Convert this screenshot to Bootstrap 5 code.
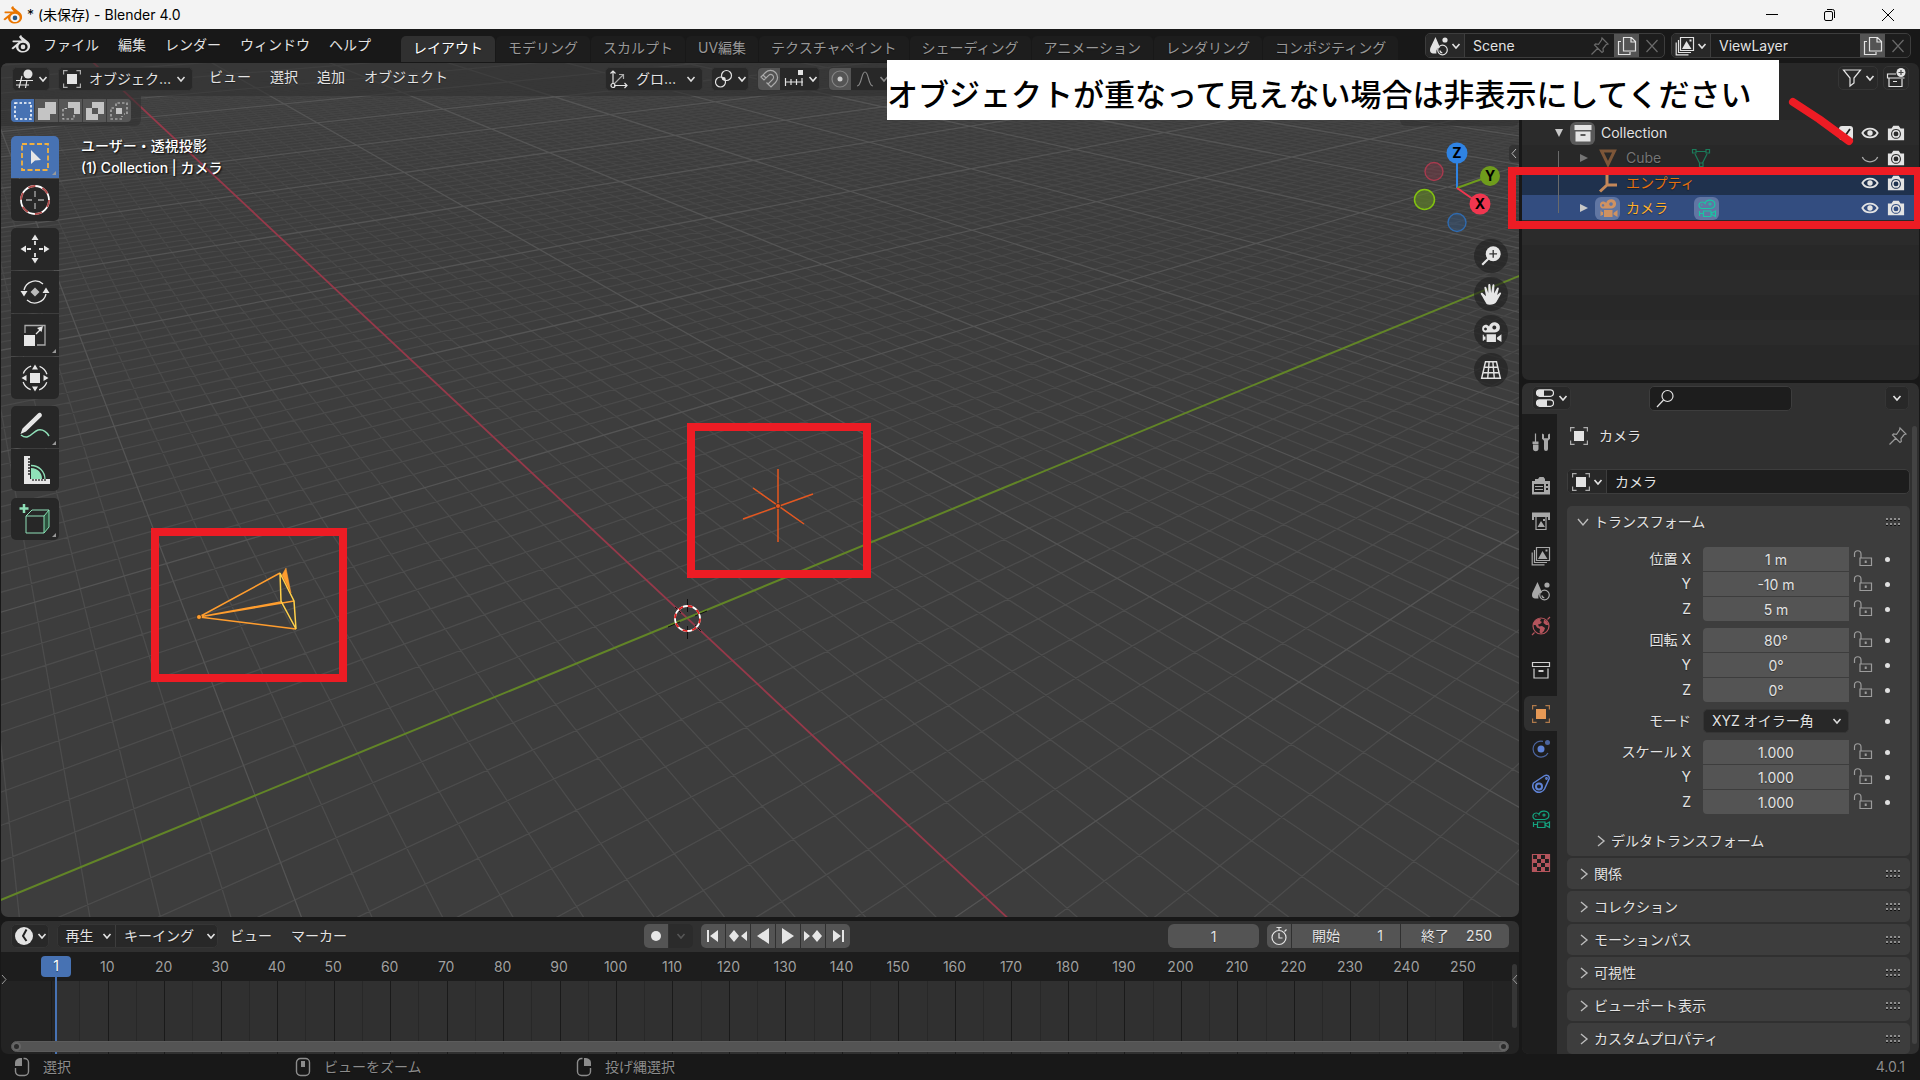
<!DOCTYPE html>
<html lang="ja" data-bs-theme="dark">
<head>
<meta charset="utf-8">
<meta name="viewport" content="width=device-width, initial-scale=1">
<title>* (未保存) - Blender 4.0</title>
<link href="https://cdn.jsdelivr.net/npm/bootstrap@5.3.0/dist/css/bootstrap.min.css" rel="stylesheet">
<style>
:root{--ui:#303030;--deep:#1d1d1d;--btn:#282828;--line:#3d3d3d;--num:#545454;--accent:#4772b3;--txt:#e3e3e3;--note:#ed1c24}
body{background:#181818;color:var(--txt);font:14px/20px Inter,"Noto Sans CJK JP",sans-serif;overflow:hidden;text-shadow:0 1px 1px rgba(0,0,0,.4)}
svg{display:block;flex:none}
.ic{width:20px;height:20px;fill:none;stroke:currentColor;stroke-width:1.2}
.chev{width:10px;height:10px;fill:none;stroke:currentColor;stroke-width:1.6}
button,input,select{font:inherit;color:inherit;text-shadow:inherit}
button{border:0;padding:0;background:none;display:flex;align-items:center;justify-content:center}
.app{height:100vh}
.titlebar{height:29px;background:#f3f3f3;color:#000;text-shadow:none;padding-left:3px}
.titlebar button{width:58px;height:29px}
.titlebar div{margin-right:3px}
.topbar{height:34px;background:#181818;padding:0 9px 0 11px}
.topbar a,.menus a{color:inherit;text-decoration:none;white-space:nowrap}
.mainmenu{gap:19px;padding:0 30px 2px 12px}
.wtab{height:26px;background:#1d1d1d;color:#989898 !important;border-radius:5px 5px 0 0;padding:2px 12px 0;line-height:20px}
.wtab.active{background:var(--ui);color:#fff !important}
.tabstrip{gap:1px;overflow:hidden;height:26px;margin-top:7px;flex:1 1 0;min-width:0}
.idrow{gap:6px}
.idblock{height:25px;border:1px solid var(--line);border-radius:5px;background:var(--deep);overflow:hidden;width:240px}
.idblock>button{width:25px;height:100%}
.idblock>.idpick{width:39px;background:var(--btn);border-right:1px solid var(--line);gap:2px}
.idblock input{flex:1;min-width:0;border:0;background:none;outline:0;padding:0 8px}
.copy{background:var(--num)}
.dim{color:#6a6a6a}
.main{padding:0 1px;gap:3px}
.leftcol{gap:4px}
.viewport{background:#3d3d3d;border-radius:7px;overflow:hidden}
.scene{position:absolute;inset:0;width:100%;height:100%}
.vhead{position:relative;height:33px;background:rgba(48,48,48,.6);padding:4px 11px 5px}
.pill{height:24px;background:var(--btn);border:1px solid #353535;border-radius:5px;color:var(--txt);gap:3px}
.pick{width:38px}
.menus{gap:19px;padding-left:16px}
.vgroup{margin-left:auto;margin-right:617px}
select.bpick{appearance:none;background:var(--btn) url("data:image/svg+xml,%3Csvg xmlns='http://www.w3.org/2000/svg' viewBox='0 0 10 10'%3E%3Cpath fill='none' stroke='%23ddd' stroke-width='1.5' d='M1.5 3l3.500 4 3.500-4'/%3E%3C/svg%3E") no-repeat right 6px center/10px;border:1px solid #353535;border-radius:5px;height:24px;padding:0 20px 0 8px;outline:0}
.withicon{position:relative}
.withicon>svg{position:absolute;left:4px;top:2px;pointer-events:none}
.withicon>select{padding-left:30px}
.modesel{width:135px}
.orisel{width:98px}
.wide63{width:63px}
.half{width:22px}
.selbar{position:relative;background:rgba(48,48,48,.6);width:140px;height:30px;padding:3px 0 0 10px;border-radius:0 0 6px 0}
.selbar button{width:24px;height:23px;background:#565656;border-right:1px solid #3d3d3d;color:#c4c4c4}
.selbar button:first-child{background:var(--accent);border-radius:4px 0 0 4px;color:#fff}
.selbar button:last-child{border-radius:0 4px 4px 0;border:0}
.optbar{position:relative;width:119px;height:30px;background:rgba(48,48,48,.6);border-radius:0 0 6px 6px}
.tools{gap:7px;padding:10px 0 0 10px;position:relative}
.tgroup{gap:1px;border-radius:5px;overflow:hidden;width:48px}
.tgroup button{width:48px;height:42px;background:#272727;position:relative}
.tgroup svg{width:32px;height:32px;fill:none;stroke:#e6e6e6;stroke-width:1.3}
.tgroup .on{background:var(--accent)}
.more::after{content:"";position:absolute;right:3px;bottom:3px;border:2px solid transparent;border-right-color:#999;border-bottom-color:#999}
.vinfo{position:relative;padding:9px 0 0 22px;line-height:22px;color:#fff;text-shadow:1px 1px 2px #000;font-weight:500}
.navcol{position:absolute;right:11px;top:176px;gap:4px}
.navcol button{width:34px;height:34px;border-radius:50%;background:rgba(30,30,30,.6)}
.navcol svg{width:22px;height:22px}
.flap{position:absolute;right:0;top:82px;width:10px;height:17px;background:#333;border-radius:4px 0 0 4px}
.timeline{background:#232323;border-radius:7px;overflow:hidden;position:relative}
.thead{height:31px;background:var(--ui);padding:3px 10px 4px}
.seg{border-radius:5px;overflow:hidden;height:24px;gap:1px}
.seg>button{width:24px;background:var(--num)}
.seg>.keyset{background:#2b2b2b;color:#555}
.ctr{flex:1 1 0}
.playgroup{padding-right:27px}
.playmenu{width:161px}
.playmenu>:first-child{width:58px;border-right:1px solid #3d3d3d}
.tmenus{padding:2px 0 0 12px}
.numin{background:var(--num);border:0;outline:0;text-align:center;height:24px;min-width:0;padding:0}
.frame{width:91px}
.fseg{background:var(--num);width:108px;height:24px;padding:0 17px 0 20px;line-height:24px}
.fseg input{width:32px;text-align:right;background:none;border:0;outline:0;padding:0}
.ruler{height:29px;background:var(--deep);padding:5px 28px 0 78px;color:#a0a0a0}
.ruler span{flex:1 1 0;text-align:center}
.track{height:73px;width:100%}
.playhead{position:absolute;left:40px;top:35px;width:30px;bottom:0}
.playhead b{display:block;height:21px;background:var(--accent);border-radius:4px;text-align:center;color:#fff;font-weight:400}
.playhead i{display:block;width:2px;height:77px;background:var(--accent);margin:0 auto}
.hscroll{position:absolute;left:10px;right:10px;bottom:2px;height:11px;background:var(--num);border-radius:6px;border:1px solid #5c5c5c}
.hscroll::before,.hscroll::after{content:"";position:absolute;width:9px;height:9px;border:2px solid #666;background:#2b2b2b;border-radius:50%;top:0}
.hscroll::after{right:0}
.vscroll{position:absolute;right:2px;top:43px;width:5px;height:64px;background:#363636;border-radius:3px}
.tflap{position:absolute;top:50px}
.rightcol{flex:0 0 397px;gap:3px}
.outliner{height:317px;background:var(--btn);border-radius:7px;position:relative}
.ohead{height:32px;padding:3px 10px 0;justify-content:flex-end;gap:5px}
.orow{height:25px;gap:6px;padding:1px 14px 0 57px}
.orow:nth-child(even){background:#2b2b2b}
.orow.top{padding-left:32px}
.orow.hid{color:#757575}
.orow.selr{background:#1f314d}
.orow.act{background:#334d80}
.orow .tri{width:10px;height:10px;fill:#c8c8c8}
.orow.hid .tri{fill:#757575}
.halo{width:25px;height:23px;border-radius:6px;background:#5a5a5a;display:flex;align-items:center;justify-content:center}
.halo.blue{background:#6176a3}
.slot{width:25px;display:flex;justify-content:center}
.databit{margin-left:20px}
.orow .eye{width:18px;height:18px}
.tick{position:relative;display:flex}
.tick input{appearance:none;width:14px;height:14px;border-radius:3px;background:#e6e6e6;margin:0}
.tick svg{position:absolute;left:2px;top:2px;pointer-events:none}
.tree{position:absolute;left:36px;top:88px;width:1px;height:62px;background:#6a6a6a}
.notebox{position:absolute;left:-14px;right:-1px;top:104px;height:62px;border:8px solid var(--note);border-right-width:6px;z-index:6}
.banner{position:absolute;right:140px;top:-3px;height:60px;width:892px;background:#fff;color:#000;text-shadow:none;font:500 31px/34px "Noto Sans CJK JP",sans-serif;padding:16px 0 0;white-space:nowrap;z-index:5}
.notemark{position:absolute;right:60px;top:34px;width:72px;height:52px;z-index:6}
.props{background:var(--ui);border-radius:7px;overflow:hidden}
.phead{height:31px;padding:3px 10px 4px}
.search{width:143px;height:25px;background:var(--deep);border:1px solid var(--line);border-radius:5px;padding-left:5px}
.search input{background:none;border:0;outline:0;width:110px;padding:0}
.ptabs{width:35px;background:var(--deep);padding:10px 0 0 2px;color:#a8a8a8}
.ptabs button{height:35px;width:33px}
.ptabs .gap9{margin-bottom:9px}
.ptabs .cur{background:var(--ui);border-radius:6px 0 0 6px;color:#e59855}
.ptabs .red{color:#b4545c}
.ptabs .blu{color:#5f83d6}
.ptabs .grn{color:#14a37f}
.pbody{flex:1;min-width:0;padding:0 9px 0 10px;position:relative}
.pbar{position:absolute;right:2px;top:12px;bottom:10px;width:5px;border-radius:3px;background:#434343}
.crumb{height:44px;padding:0 2px;gap:10px;margin-bottom:11px}
.namefield{height:25px;width:auto;margin-bottom:12px}
.pnl{background:#3d3d3d;border-radius:5px;margin-bottom:2px}
.pnl>button{width:100%;height:31px;justify-content:flex-start;padding:0 9px 0 12px;gap:5px;text-align:left}
.pnl>button>svg:first-child{fill:none;stroke:#bbb;stroke-width:1.4}
.pnl>.opent{height:32px;padding-left:10px}
.pnl>.delta{padding-left:29px;margin-top:11px}
.grip{width:15px;height:8px;margin-left:auto}
.fields{padding:9px 0 0;gap:7px}
.fgroup{display:grid;grid-template-columns:1fr 146px 24px 37px;row-gap:1px;align-items:center}
.fgroup label{text-align:right;padding-right:12px}
.fgroup .numin{width:146px}
.fgroup .numin:first-of-type{border-radius:4px 0 0 0}
.fgroup .lastn{border-radius:0 0 0 4px}
.fgroup svg.lk{width:20px;height:20px;justify-self:end;color:#9c9c9c}
.dot{width:5px;height:5px;border-radius:50%;background:#e0e0e0;margin-left:12px}
.status{height:26px;color:#8c8c8c;padding:0 15px 0 14px}
.status>span{width:281px;gap:13px;display:flex;align-items:center}
.status svg{width:16px;height:20px;fill:none;stroke:#8c8c8c;stroke-width:1.4}
.status .solid{fill:#8c8c8c;stroke:none}
</style>
<script src="https://cdn.jsdelivr.net/npm/bootstrap@5.3.0/dist/js/bootstrap.bundle.min.js"></script>
</head>
<body>
<svg width="0" height="0" class="position-absolute">
<symbol id="chev" viewBox="0 0 10 10"><path d="M1.500 3l3.500 4 3.500-4"/></symbol>
<symbol id="right" viewBox="0 0 10 14"><path d="M2 2l6 5-6 5"/></symbol>
<symbol id="grip" viewBox="0 0 15 8"><g fill="#8f8f8f" stroke="none"><path d="M0 0h2v2H0zM4 0h2v2H4zM8 0h2v2H8zM12 0h2v2h-2zM0 5h2v2H0zM4 5h2v2H4zM8 5h2v2H8zM12 5h2v2h-2z"/><path fill="#111" d="M0 2h2v1H0zM4 2h2v1H4zM8 2h2v1H8zM12 2h2v1h-2zM0 7h2v1H0zM4 7h2v1H4zM8 7h2v1H8zM12 7h2v1h-2z"/></g></symbol>
<symbol id="logo" viewBox="0 0 20 20"><path fill="currentColor" stroke="none" fill-rule="evenodd" d="M9.300 1.500c.8-.6 1.800.2 1.400.9l6.300 5.200c2 1.700 2.600 4.600 1.600 7-1.100 2.500-3.800 4-6.700 4-3.700 0-6.700-2.400-6.900-5.600L2.400 15c-1 .8-2.300-.3-1.500-1.300l6.600-5.400H2.400c-1.200 0-1.300-1.900 0-1.900h8.300L8.500 3.700c-.8-.6-.2-1.600.8-2.200zM12 8.700a4.600 4.200 0 1 0 .01 0z"/><circle cx="12" cy="12.900" r="2.300" fill="var(--eye,currentColor)" stroke="none"/></symbol>
<symbol id="object" viewBox="0 0 20 20"><path fill="currentColor" stroke="none" d="M5 5h10v10H5z"/><path opacity=".7" d="M1.600 5.500V1.600h4M14.400 1.600h4v3.900M18.400 14.500v3.900h-4M5.600 18.400h-4v-3.900"/></symbol>
<symbol id="view3d" viewBox="0 0 20 20"><circle cx="13" cy="5" r="4.500" fill="currentColor" stroke="none"/><path d="M1 11.500h17M1 16h13M7 7L4 19M12 11l-1.500 8"/></symbol>
<symbol id="orient" viewBox="0 0 20 20"><path d="M4 15V2M1.500 4.500L4 2l2.500 2.500M5 16.500h13M15.500 14l2.500 2.500-2.500 2.500"/><path opacity=".7" d="M5 15L14 6M10 5.500h4.500V10"/><circle cx="4" cy="16.500" r="2"/></symbol>
<symbol id="pivot" viewBox="0 0 20 20"><circle cx="12.500" cy="6.500" r="5"/><circle cx="6.500" cy="13" r="5"/><circle cx="9.800" cy="9.800" r="1.800" fill="currentColor" stroke="none"/></symbol>
<symbol id="magnet" viewBox="0 0 20 20"><path d="M2 8l4.500-4.500a7 7 0 0 1 10 10L12 18l-3-3 4.700-4.700a2.800 2.800 0 0 0-4-4L5 11zM4 6l3 3M10.500 16.500l-3-3"/></symbol>
<symbol id="snapinc" viewBox="0 0 20 20"><path d="M1 13h18M1.500 9v8M7 10v6M12.500 10v6M18 9v8"/><path fill="currentColor" stroke="none" d="M14 1h5v5h-5z"/></symbol>
<symbol id="prop" viewBox="0 0 20 20"><circle cx="10" cy="10" r="8" opacity=".4"/><circle cx="10" cy="10" r="2.500" fill="currentColor" stroke="none"/></symbol>
<symbol id="curve" viewBox="0 0 20 20"><path d="M2 17c5 0 4-14 8-14s3 14 8 14"/></symbol>
<symbol id="scn" viewBox="0 0 20 20"><path fill="currentColor" stroke="none" d="M6.500 1L11 11.500c-3 0-4 3-3.500 6H4c-3-.5-3.500-3-2.500-6z"/><circle cx="16" cy="4" r="2.600" fill="currentColor" stroke="none"/><circle cx="13.500" cy="14" r="4.800"/><path d="M10.800 14.500a3 3 0 0 0 2.500 2.300"/></symbol>
<symbol id="layers" viewBox="0 0 20 20"><path d="M5.500 1.500h13v13h-13zM3.500 4v12.500H16M1.200 6.500v12.300h12.300"/><path fill="currentColor" stroke="none" d="M7 13l4.500-8 5 8zM14.500 3.500h2v2h-2z"/></symbol>
<symbol id="pin" viewBox="0 0 20 20"><path d="M12 2l6 6-2 .8-3 3.700.3 3-1.300 1L4.500 9l1-1 3 .3L11.500 4zM8 12l-6.500 6.500"/></symbol>
<symbol id="copy" viewBox="0 0 20 20"><path d="M6.500 1.500h8l4 4v9.500h-12zM14 1.500V6h4.500M4 5.500H1.500v13H13V16"/></symbol>
<symbol id="cross" viewBox="0 0 20 20"><path d="M4.500 4l11 12M15.500 4l-11 12"/></symbol>
<symbol id="funnel" viewBox="0 0 20 20"><path d="M1.500 2h17l-6.500 8v5l-4 3v-8z"/></symbol>
<symbol id="archive" viewBox="0 0 20 20"><path d="M1.500 2.500h17v4h-17zM3 8.500v9.500h14V8.500"/><path stroke-width="2" d="M7.500 11h5"/></symbol>
<symbol id="archivef" viewBox="0 0 20 20"><path fill="currentColor" stroke="none" fill-rule="evenodd" d="M1.500 2h17v5h-17zM2.500 8.500h15v10h-15zM7.500 11v2h5v-2z"/></symbol>
<symbol id="archadd" viewBox="0 0 20 20"><path d="M10 6H1.500v4h17M3 10v8.500h13V11M7 13.500h4"/><circle cx="15" cy="4.500" r="4.500" fill="currentColor" stroke="none"/><path stroke="#444" d="M15 2v5M12.500 4.500h5"/></symbol>
<symbol id="eye" viewBox="0 0 20 20"><path stroke-width="2" d="M1.500 10C5 3.500 15 3.500 18.500 10 15 16.500 5 16.500 1.500 10z"/><circle cx="10" cy="10" r="3" fill="currentColor" stroke="none"/></symbol>
<symbol id="eyeoff" viewBox="0 0 20 20"><path stroke-width="1.500" d="M1.500 9c3 7 14 7 17 0"/></symbol>
<symbol id="photo" viewBox="0 0 20 20"><path fill="currentColor" stroke="none" fill-rule="evenodd" d="M1 5h4l2-3h6l2 3h4v13H1zM10 5.500a5.500 5.500 0 1 0 .01 0z"/><circle cx="10" cy="11" r="3.500" stroke-width="1.600"/></symbol>
<symbol id="cam" viewBox="0 0 20 20"><path fill="currentColor" stroke="none" fill-rule="evenodd" d="M5 3.500c1.500 0 2.500.5 3.200 1.500A5 4.700 0 1 1 12.500 10.500H4.500A3.600 3.600 0 0 1 5 3.500zM13 4.200a1.800 1.800 0 1 0 .01 0zM5 6a1.300 1.300 0 1 0 .01 0zM6 12h8.500v7H6zM15.500 15l4-3v7l-4-2.500zM2.500 12.500h1V14H5v3H3.500v1h-1z"/></symbol>
<symbol id="camo" viewBox="0 0 20 20"><path d="M4.500 10.500a3.300 3.300 0 1 1 3.500-5 5 4.200 0 1 1 5.500 5zM6.500 13h7.500v5.500H6.500zM14 15.500l4.500-2.500v5.500L14 16M2.500 13v5M3 15.500h3"/><circle cx="13" cy="6" r="1"/><path d="M4 7h1.500"/></symbol>
<symbol id="mesh" viewBox="0 0 20 20"><path stroke-width="3" d="M3.500 3h13L10 16.500z"/></symbol>
<symbol id="meshd" viewBox="0 0 20 20"><path d="M5 3.500h10M4 6l4.500 9M16 6l-4.500 9M1.500 1.500H5V5H1.500zM15 1.500h3.500V5H15zM8.500 15H12v3.500H8.500z"/></symbol>
<symbol id="axes" viewBox="0 0 20 20"><path stroke-width="3" d="M9 1v11h10M9 12l-7 6.500"/></symbol>
<symbol id="search" viewBox="0 0 20 20"><circle cx="12.500" cy="7" r="5.500"/><path d="M8.500 11L2 18"/></symbol>
<symbol id="toggles" viewBox="0 0 20 20"><rect x="1.500" y="1.800" width="17" height="6.500" rx="3.200"/><rect x="1.500" y="11.800" width="17" height="6.500" rx="3.200"/><path fill="currentColor" stroke="none" d="M4.500 2H9v6H4.500a3 3 0 0 1 0-6zM4.500 12H12v6H4.500a3 3 0 0 1 0-6z"/></symbol>
<symbol id="tool" viewBox="0 0 20 20"><path d="M4.500 1.500V10"/><path fill="currentColor" stroke="none" d="M1.500 9.500h6V12h-6zM2 12.500h5.500v4a2.700 2.700 0 0 1-5.500 0zM11 1.500v5.200l2 2V17a1.800 1.800 0 0 0 4 0V8.700l2-2V1.500l-2 1v3.700h-4V2.500z"/></symbol>
<symbol id="render" viewBox="0 0 20 20"><path fill="currentColor" stroke="none" fill-rule="evenodd" d="M1 5h3V3h3l1.500-2h4L14 3v2h5v13.500H1zM3 8v8h10V8zM15 8v2h2V8zM15 12v2h2v-2z"/><path d="M4 10.500h8M4 13.500h8"/></symbol>
<symbol id="print" viewBox="0 0 20 20"><path fill="currentColor" stroke="none" d="M1 1.500h18V9h-2V6H3v3H1z"/><path d="M5 6v12.500h10V6"/><path fill="currentColor" stroke="none" d="M6.500 16l3.500-6 4 6zM12 8h2v2h-2z"/></symbol>
<symbol id="world" viewBox="0 0 20 20"><circle cx="10" cy="10" r="8"/><path fill="currentColor" stroke="none" d="M3 6c2-3 5-4 7-3l-1 2 2 1-2 2-2 .5 1 2 3-.5 3 2-1 3-3 3-1.500-2L9 13l-3-1.500L4.500 9 2.500 9zM13 3.500l3 2 1.500 3.500-2.500 0L12.500 7z"/><path d="M1 19l2.500-2.500M19 1l-2.500 2.500"/></symbol>
<symbol id="phys" viewBox="0 0 20 20"><circle cx="10" cy="10" r="3.500" fill="currentColor" stroke="none"/><path opacity=".7" d="M12 2.300A8 8 0 1 0 17 14"/><circle cx="16.500" cy="3.500" r="2.500" fill="currentColor" stroke="none" opacity=".7"/></symbol>
<symbol id="cons" viewBox="0 0 20 20"><path stroke-width="1.500" d="M2.500 9L13 2c3-2 6 0 5 3l-4.500 10A6.200 6.200 0 1 1 2.500 9z"/><circle cx="8" cy="12.500" r="3" stroke-width="2"/><circle cx="15.500" cy="4.500" r=".8"/></symbol>
<symbol id="tex" viewBox="0 0 20 20"><path d="M1.500 1.500h17v17h-17z"/><path fill="currentColor" stroke="none" d="M6 2h4v4H6zM14 2h4v4h-4zM2 6h4v4H2zM10 6h4v4h-4zM6 10h4v4H6zM14 10h4v4h-4zM2 14h4v4H2zM10 14h4v4h-4z"/></symbol>
<symbol id="lock" viewBox="0 0 20 20"><path d="M1.500 8V5a3 3 0 0 1 6.500 0v4M7 9h11.500v7.500H7z"/><path stroke-width="2" d="M12.700 11.500v2.500"/></symbol>
<symbol id="clock" viewBox="0 0 20 20"><circle cx="10" cy="10" r="9" fill="currentColor" stroke="none"/><path stroke="#222" stroke-width="2" d="M12.500 3.500L9 10l3.500 5"/></symbol>
<symbol id="watch" viewBox="0 0 20 20"><circle cx="10" cy="11.500" r="7"/><path d="M10 7v5h3.500M10 4V1.500M7.500 1.500h5M15.500 5.500l2-2"/></symbol>
</svg>

<div class="app d-flex flex-column">
<header class="titlebar d-flex align-items-center">
<svg class="ic me-1" style="color:#ea7600;--eye:#265787"><use href="#logo"/></svg><span>* (未保存) - Blender 4.0</span>
<div class="d-flex ms-auto">
<button aria-label="最小化"><svg width="12" height="12" stroke="#000"><path d="M0 5.500h12"/></svg></button>
<button aria-label="元に戻す"><svg width="14" height="14" fill="none" stroke="#000"><rect x="1.500" y="3.500" width="8" height="9" rx="1.500"/><path d="M4 1.500h5.500a2 2 0 0 1 2 2V10"/></svg></button>
<button aria-label="閉じる"><svg width="14" height="14" stroke="#000"><path d="M1 1l12 12M13 1L1 13"/></svg></button>
</div>
</header>

<nav class="topbar d-flex">
<div class="d-flex align-items-center pb-1"><svg class="ic" style="color:#e0e0e0;--eye:#e0e0e0"><use href="#logo"/></svg></div>
<div class="mainmenu d-flex align-items-center"><a href="#">ファイル</a><a href="#">編集</a><a href="#">レンダー</a><a href="#">ウィンドウ</a><a href="#">ヘルプ</a></div>
<div class="tabstrip d-flex"><a class="wtab active" href="#">レイアウト</a><a class="wtab" href="#">モデリング</a><a class="wtab" href="#">スカルプト</a><a class="wtab" href="#">UV編集</a><a class="wtab" href="#">テクスチャペイント</a><a class="wtab" href="#">シェーディング</a><a class="wtab" href="#">アニメーション</a><a class="wtab" href="#">レンダリング</a><a class="wtab" href="#">コンポジティング</a></div>
<div class="idrow d-flex ps-2 pt-1">
<div class="idblock d-flex align-items-center"><button class="idpick" aria-label="シーン"><svg class="ic"><use href="#scn"/></svg><svg class="chev"><use href="#chev"/></svg></button><input aria-label="シーン名" value="Scene"><svg class="ic dim me-1"><use href="#pin"/></svg><button class="copy" aria-label="新規シーン"><svg class="ic"><use href="#copy"/></svg></button><button class="dim" aria-label="シーン削除"><svg class="ic"><use href="#cross"/></svg></button></div>
<div class="idblock d-flex align-items-center"><button class="idpick" aria-label="ビューレイヤー"><svg class="ic"><use href="#layers"/></svg><svg class="chev"><use href="#chev"/></svg></button><input aria-label="ビューレイヤー名" value="ViewLayer"><button class="copy" aria-label="新規レイヤー"><svg class="ic"><use href="#copy"/></svg></button><button class="dim" aria-label="レイヤー削除"><svg class="ic"><use href="#cross"/></svg></button></div>
</div>
</nav>

<main class="main d-flex flex-grow-1" style="min-height:0">
<div class="leftcol d-flex flex-column flex-grow-1" style="min-width:0">
<section class="viewport position-relative flex-grow-1">
<svg class="scene" viewBox="1 63 1518 854" preserveAspectRatio="xMidYMid slice">
<defs><linearGradient id="fade" x1="0" y1="63" x2="0" y2="917" gradientUnits="userSpaceOnUse"><stop offset="0" stop-color="#666"/><stop offset=".25" stop-color="#bbb"/><stop offset=".6" stop-color="#fff"/></linearGradient><mask id="fm" maskUnits="userSpaceOnUse" x="0" y="0" width="1600" height="1000"><rect width="1600" height="1000" fill="url(#fade)"/></mask></defs>
<g mask="url(#fm)"><path id="minor" fill="none" stroke="#4c4c4c" stroke-width="1.300"/></g>
<path id="major" fill="none" stroke="#545454" stroke-width="1.300"/>
<path id="axx" stroke="#96394a" stroke-width="1.800"/><path id="axy" stroke="#628527" stroke-width="2"/>
<g stroke="#111" stroke-width="1"><path d="M687.500 599v13M687.500 626v13M675 607l6 6M695 625l6 6M668 627l12-5M695 616l12-5"/></g>
<circle cx="687.500" cy="618.500" r="12.500" fill="none" stroke="#fff" stroke-width="1.800"/><circle cx="687.500" cy="618.500" r="12.500" fill="none" stroke="#e02020" stroke-width="1.800" stroke-dasharray="4.900 4.900"/>
<g stroke="#e5571f" stroke-width="1.500"><path d="M778 469v73M743 519l70-25M753 488l51 36"/></g><circle cx="778" cy="506" r="2.500" fill="#e5571f" stroke="#222" stroke-width=".7"/>
<g fill="none" stroke="#ff9d2e" stroke-width="1.500"><path d="M199 617l81-44M199 617l82-15M199 617l95-16M199 617l97 12"/><path stroke="#ffd04a" d="M280 573l14 28 2 28-15-28z"/><path fill="#ff9d2e" stroke-width=".5" d="M282 575l4-7 5 25z"/></g><circle cx="199" cy="617" r="2.500" fill="#ff9d2e" stroke="#222" stroke-width=".7"/>
<g fill="none" stroke="#ed1c24" stroke-width="8"><path d="M155 532h188v146H155zM691 427h176v147H691z"/></g>
</svg>
<div class="vhead d-flex align-items-start">
<button class="pill pick me-2" aria-label="エディタータイプ"><svg class="ic"><use href="#view3d"/></svg><svg class="chev"><use href="#chev"/></svg></button>
<div class="withicon"><svg class="ic"><use href="#object"/></svg><select class="bpick modesel" aria-label="モード"><option>オブジェク…</option></select></div>
<div class="menus d-flex"><a href="#">ビュー</a><a href="#">選択</a><a href="#">追加</a><a href="#">オブジェクト</a></div>
<div class="vgroup d-flex gap-2">
<div class="withicon"><svg class="ic"><use href="#orient"/></svg><select class="bpick orisel" aria-label="座標系"><option>グロ…</option></select></div>
<button class="pill pick" aria-label="ピボット"><svg class="ic"><use href="#pivot"/></svg><svg class="chev"><use href="#chev"/></svg></button>
<div class="pill wide63 d-flex overflow-hidden"><button class="copy half" style="color:#aaa" aria-label="スナップ"><svg class="ic"><use href="#magnet"/></svg></button><button class="flex-grow-1 gap-1" aria-label="スナップ先"><svg class="ic"><use href="#snapinc"/></svg><svg class="chev"><use href="#chev"/></svg></button></div>
<div class="pill wide63 d-flex overflow-hidden" style="color:#888"><button class="copy half" style="color:#ccc" aria-label="プロポーショナル編集"><svg class="ic"><use href="#prop"/></svg></button><button class="flex-grow-1 gap-1" aria-label="減衰"><svg class="ic"><use href="#curve"/></svg><svg class="chev"><use href="#chev"/></svg></button></div>
</div>
</div>
<div class="d-flex justify-content-between"><div class="selbar d-flex">
<button aria-label="新規選択"><svg class="ic" viewBox="0 0 20 20"><path stroke-dasharray="2.500 2" stroke-width="1.600" d="M2 2h16v16H2z"/></svg></button>
<button aria-label="追加選択"><svg class="ic" viewBox="0 0 20 20"><path fill="currentColor" stroke="none" d="M8 1h11v12h-6v6H1V7h7z"/></svg></button>
<button aria-label="選択除外"><svg class="ic" viewBox="0 0 20 20"><path fill="currentColor" stroke="none" d="M7 1h12v12h-6V7H7z"/><path stroke-dasharray="2.500 2" d="M6 7.500H2V18h11v-4"/></svg></button>
<button aria-label="選択反転"><svg class="ic" viewBox="0 0 20 20"><path fill="currentColor" stroke="none" fill-rule="evenodd" d="M7 1h12v12h-6v6H1V7h6zM7 7v6h6V7z"/></svg></button>
<button aria-label="交差選択"><svg class="ic" viewBox="0 0 20 20"><path fill="currentColor" stroke="none" d="M7 7h6v6H7z"/><path stroke-dasharray="2.500 2" d="M7 5V2h11v11h-3M5 7H2v11h11v-3"/></svg></button>
</div><div class="optbar"></div></div>
<div class="d-flex">
<div class="tools d-flex flex-column">
<div class="tgroup d-flex flex-column">
<button class="on more" aria-label="ボックス選択"><svg viewBox="0 0 32 32"><path stroke="#f0b040" stroke-width="1.800" stroke-dasharray="5 2.500" d="M3 3h26v26H3z"/><path fill="#e6e6e6" stroke="none" d="M12 9v14l4-3.500 6-.5z"/></svg></button>
<button aria-label="カーソル"><svg viewBox="0 0 32 32"><circle cx="16" cy="16" r="14" stroke="#fff" stroke-width="1.800"/><circle cx="16" cy="16" r="14" stroke="#b04a4a" stroke-width="1.800" stroke-dasharray="7.330 7.330"/><path stroke="#aaa" d="M16 7v6M16 19v6M7 16h6M19 16h6"/></svg></button></div>
<div class="tgroup d-flex flex-column">
<button aria-label="移動"><svg viewBox="0 0 32 32"><path fill="#e6e6e6" stroke="none" d="M16 1.500l3.500 5.500h-7zM16 30.500l3.500-5.500h-7zM1.500 16L7 12.500v7zM30.500 16L25 12.500v7z"/><path stroke-width="1.800" d="M16 8v4M16 20v4M8 16h4M20 16h4"/></svg></button>
<button aria-label="回転"><svg viewBox="0 0 32 32"><path fill="#bbb" stroke="none" d="M16 11.500l4.500 4.500-4.500 4.500-4.500-4.500z"/><path d="M5 14a11.500 11.500 0 0 1 19-6M27 18a11.500 11.500 0 0 1-19 6"/><path fill="#e6e6e6" stroke="none" d="M1.500 15h7L5 20.500zM23.500 17h7L27 11.500z"/></svg></button>
<button class="more" aria-label="スケール"><svg viewBox="0 0 32 32"><path fill="#e6e6e6" stroke="none" d="M5 16h11v11H5zM18 9l6-2-1.500 6z"/><path stroke="#aaa" d="M6 14V6.500h20V26H18"/><path d="M17 15l5-5"/></svg></button>
<button aria-label="トランスフォーム"><svg viewBox="0 0 32 32"><path fill="#e6e6e6" stroke="none" d="M11 11h10v10H11zM16 2.500l3 5h-6zM16 29.500l3-5h-6zM2.500 16l5-3v6zM29.500 16l-5-3v6z"/><circle cx="16" cy="16" r="12.500" stroke-dasharray="11 8.630" stroke-dashoffset="-4.300"/></svg></button></div>
<div class="tgroup d-flex flex-column">
<button class="more" aria-label="アノテート"><svg viewBox="0 0 32 32"><path stroke="#8fe0b8" stroke-width="1.500" d="M2 24c8 6 11-3 17-5 5-1 8 1 11 6"/><path fill="#e6e6e6" stroke="none" d="M19 2.500c2-2 5 1 3.500 3L7 20.500 1.500 23l2-5.500z"/></svg></button>
<button aria-label="メジャー"><svg viewBox="0 0 32 32"><path fill="#8fe0b8" stroke="none" d="M12 14c7 0 11 5 11 11H12z"/><path stroke="#8fe0b8" d="M12 11.500c8 0 14 6 14 14"/><path fill="#e6e6e6" stroke="none" d="M5 2h6v23h20v5H5z"/><path stroke="#272727" d="M9 5h2M9 8h2M9 11h2M9 14h2M9 17h2M9 20h2M14 25v2M17 25v2M20 25v2M23 25v2M26 25v2"/></svg></button></div>
<div class="tgroup"><button class="more" aria-label="立方体を追加"><svg viewBox="0 0 32 32"><path stroke="#8fe0b8" stroke-width="1" d="M7 13h18v17H7zM7 13l6-6h17v17l-5 6M25 13l5-6"/><path fill="#4f9" fill-opacity=".2" stroke="none" d="M25 13l5-6v17l-5 6z"/><path stroke="#8fe0b8" stroke-width="2.500" d="M5 1v9M.5 5.500h9"/></svg></button></div>
</div>
<div class="vinfo">ユーザー・透視投影<br>(1) Collection | カメラ</div>
</div>
<svg class="position-absolute end-0 top-0" width="120" height="180" viewBox="1399 63 120 180" font-size="14" font-weight="700" text-anchor="middle" style="text-shadow:none">
<circle cx="1434" cy="171.500" r="9" fill="#96394a55" stroke="#a83a4e" stroke-width="1.400"/><circle cx="1457" cy="222.500" r="9" fill="#2f5f9a55" stroke="#2f6bb0" stroke-width="1.400"/><circle cx="1424.500" cy="199.500" r="10" fill="#5f8027aa" stroke="#82c210" stroke-width="1.500"/>
<g stroke-width="2"><path stroke="#2f83e3" d="M1457 188v-35"/><path stroke="#6f9c1c" d="M1457 188l33-12"/><path stroke="#f0364f" d="M1457 188l23 16"/></g>
<circle cx="1457" cy="153" r="10.500" fill="#2f83e3"/><circle cx="1490" cy="176" r="10" fill="#6f9c1c"/><circle cx="1480" cy="204" r="10.500" fill="#f0364f"/>
<text x="1457" y="158">Z</text><text x="1490" y="181">Y</text><text x="1480" y="209">X</text></svg>
<div class="navcol d-flex flex-column">
<button aria-label="ズーム"><svg class="ic" viewBox="0 0 20 20"><circle cx="12" cy="8" r="6.800" fill="#e6e6e6" stroke="none"/><path stroke-width="2" stroke="#e6e6e6" d="M8 12l-6 6"/><path stroke="#333" d="M12 4.500v7M8.500 8h7"/></svg></button>
<button aria-label="パン"><svg class="ic" viewBox="0 0 20 20"><path fill="#e6e6e6" stroke="none" d="M6 19C4 16 2 12 .8 10.300c-.6-1 .8-2 1.700-1l3 2.700L4 4.500c-.2-1.200 1.500-1.500 1.800-.3L7.500 9V2c0-1.400 2-1.400 2 0l.6 7 1.200-7c.2-1.200 1.900-1 1.800.3L12.800 9.500l2.600-4.800c.6-1.100 2-.4 1.600.7L15.600 11l2-2c.9-.9 2 0 1.400 1L15 17c-1 2.500-7 3.500-9 2z"/></svg></button>
<button aria-label="カメラビュー"><svg class="ic"><use href="#cam"/></svg></button>
<button aria-label="透視投影"><svg class="ic" viewBox="0 0 20 20"><path stroke-width="1.300" d="M5 2.500h10l3.500 15h-17zM3.800 7.500h12.400M2.600 12.500h14.800M8.300 2.500l-1.300 15M11.700 2.500l1.300 15"/></svg></button>
</div>
<div class="flap"><svg width="10" height="17" fill="none" stroke="#bbb"><path d="M7 4L3 8.500 7 13"/></svg></div>
</section>

<section class="timeline">
<div class="thead d-flex">
<div class="ctr d-flex"><button class="pill pick me-2" aria-label="タイムライン"><svg class="ic"><use href="#clock"/></svg><svg class="chev"><use href="#chev"/></svg></button>
<div class="pill playmenu d-flex overflow-hidden"><button class="ps-1 gap-2">再生<svg class="chev"><use href="#chev"/></svg></button><button class="flex-grow-1 gap-2 ps-1">キーイング<svg class="chev ms-1"><use href="#chev"/></svg></button></div>
<div class="menus tmenus d-flex"><a href="#">ビュー</a><a href="#">マーカー</a></div></div>
<div class="playgroup d-flex gap-2"><div class="seg d-flex"><button aria-label="自動キー"><svg width="12" height="12"><circle cx="6" cy="6" r="5" fill="#e6e6e6"/></svg></button><button class="keyset" aria-label="自動キー設定"><svg class="chev"><use href="#chev"/></svg></button></div>
<div class="seg d-flex">
<button aria-label="先頭"><svg width="16" height="14" fill="#e6e6e6"><path d="M2 1h2v12H2zM13 1v12L5 7z"/></svg></button>
<button aria-label="前のキー"><svg width="20" height="14" fill="#e6e6e6"><path d="M6 1l5 6-5 6-5-6zM19 2v10l-6-5z"/></svg></button>
<button aria-label="逆再生"><svg width="16" height="16" fill="#e6e6e6"><path d="M14 0v16L2 8z"/></svg></button>
<button aria-label="再生"><svg width="16" height="16" fill="#e6e6e6"><path d="M2 0v16l12-8z"/></svg></button>
<button aria-label="次のキー"><svg width="20" height="14" fill="#e6e6e6"><path d="M14 1l5 6-5 6-5-6zM1 2v10l6-5z"/></svg></button>
<button aria-label="末尾"><svg width="16" height="14" fill="#e6e6e6"><path d="M12 1h2v12h-2zM3 1v12l8-6z"/></svg></button></div></div>
<div class="ctr d-flex justify-content-end gap-2"><input class="numin frame rounded" aria-label="現在のフレーム" value="1">
<div class="seg d-flex"><button aria-label="プレビュー範囲"><svg class="ic"><use href="#watch"/></svg></button><div class="fseg d-flex justify-content-between"><label for="fs">開始</label><input id="fs" value="1"></div><div class="fseg d-flex justify-content-between"><label for="fe">終了</label><input id="fe" value="250"></div></div></div>
</div>
<div class="ruler d-flex" id="ruler"></div>
<svg class="track" viewBox="1 0 1518 73" preserveAspectRatio="none"><rect x="56" width="1407" height="73" fill="#303030"/><path id="five" stroke="#282828"/><path id="ten" stroke="#1a1a1a"/></svg>
<div class="playhead"><b>1</b><i></i></div>
<div class="hscroll"></div><div class="vscroll"></div>
<svg class="tflap start-0" width="8" height="17" fill="none" stroke="#999"><path d="M1 4l4 4.500L1 13"/></svg>
<svg class="tflap end-0" width="8" height="17" fill="none" stroke="#999"><path d="M6 4L2 8.500 6 13"/></svg>
</section>
</div>

<aside class="rightcol d-flex flex-column">
<section class="outliner">
<div class="ohead d-flex"><button class="pill" style="width:40px" aria-label="フィルター"><svg class="ic"><use href="#funnel"/></svg><svg class="chev"><use href="#chev"/></svg></button><button class="pill copy" style="width:26px" aria-label="新規コレクション"><svg class="ic"><use href="#archadd"/></svg></button></div>
<div>
<div class="orow"></div>
<div class="orow top d-flex align-items-center"><svg class="tri" viewBox="0 0 10 10"><path d="M1 1h8L5 9z"/></svg><span class="halo"><svg class="ic"><use href="#archivef"/></svg></span>Collection<div class="ms-auto d-flex align-items-center gap-2"><span class="tick"><input type="checkbox" checked aria-label="有効"><svg width="10" height="10" fill="none" stroke="#222" stroke-width="1.800"><path d="M1 5l3 3 5-7"/></svg></span><svg class="ic eye"><use href="#eye"/></svg><svg class="ic eye"><use href="#photo"/></svg></div></div>
<div class="orow hid d-flex align-items-center"><svg class="tri" viewBox="0 0 10 10"><path d="M1 1v8l8-4z"/></svg><span class="slot" style="color:#7d5638"><svg class="ic"><use href="#mesh"/></svg></span>Cube<svg class="ic ms-4" style="color:#1b7b5a"><use href="#meshd"/></svg><div class="ms-auto d-flex align-items-center gap-2" style="color:#e3e3e3"><svg class="ic eye" style="color:#aaa"><use href="#eyeoff"/></svg><svg class="ic eye"><use href="#photo"/></svg></div></div>
<div class="orow selr d-flex align-items-center"><span style="width:10px"></span><span class="slot" style="color:#c4885a"><svg class="ic"><use href="#axes"/></svg></span><span style="color:#e4700f">エンプティ</span><div class="ms-auto d-flex align-items-center gap-2"><svg class="ic eye"><use href="#eye"/></svg><svg class="ic eye"><use href="#photo"/></svg></div></div>
<div class="orow act d-flex align-items-center"><svg class="tri" viewBox="0 0 10 10"><path d="M1 1v8l8-4z"/></svg><span class="halo blue" style="color:#cf9262"><svg class="ic"><use href="#cam"/></svg></span><span style="color:#ffaf29">カメラ</span><span class="halo blue databit" style="color:#19c7a3"><svg class="ic"><use href="#camo"/></svg></span><div class="ms-auto d-flex align-items-center gap-2"><svg class="ic eye"><use href="#eye"/></svg><svg class="ic eye"><use href="#photo"/></svg></div></div>
<div class="orow"></div><div class="orow"></div><div class="orow"></div><div class="orow"></div><div class="orow"></div><div class="orow"></div>
</div>
<div class="tree"></div>
<div class="notebox"></div>
<div class="banner">オブジェクトが重なって見えない場合は非表示にしてください</div>
<svg class="notemark" viewBox="0 0 72 52"><path d="M6 5l26 17 30 22" fill="none" stroke="#ed1c24" stroke-width="8" stroke-linecap="round" stroke-linejoin="round"/></svg>
</section>

<section class="props flex-grow-1 d-flex flex-column">
<div class="phead d-flex justify-content-between"><button class="pill" style="width:39px" aria-label="プロパティ"><svg class="ic"><use href="#toggles"/></svg><svg class="chev"><use href="#chev"/></svg></button><div class="search d-flex align-items-center me-3"><svg class="ic"><use href="#search"/></svg><input type="search" aria-label="検索"></div><button class="pill" style="width:24px" aria-label="オプション"><svg class="chev"><use href="#chev"/></svg></button></div>
<div class="d-flex flex-grow-1">
<div class="ptabs d-flex flex-column">
<button class="gap9" aria-label="ツール"><svg class="ic"><use href="#tool"/></svg></button>
<button aria-label="レンダー"><svg class="ic"><use href="#render"/></svg></button>
<button aria-label="出力"><svg class="ic"><use href="#print"/></svg></button>
<button aria-label="ビューレイヤー"><svg class="ic"><use href="#layers"/></svg></button>
<button aria-label="シーン"><svg class="ic"><use href="#scn"/></svg></button>
<button class="gap9 red" aria-label="ワールド"><svg class="ic"><use href="#world"/></svg></button>
<button class="gap9" style="color:#d0d0d0" aria-label="コレクション"><svg class="ic"><use href="#archive"/></svg></button>
<button class="cur" aria-label="オブジェクト"><svg class="ic"><use href="#object"/></svg></button>
<button class="blu" aria-label="物理演算"><svg class="ic"><use href="#phys"/></svg></button>
<button class="blu" aria-label="コンストレイント"><svg class="ic"><use href="#cons"/></svg></button>
<button class="gap9 grn" aria-label="データ"><svg class="ic"><use href="#camo"/></svg></button>
<button class="red" aria-label="テクスチャ"><svg class="ic"><use href="#tex"/></svg></button>
</div>
<div class="pbody">
<div class="crumb d-flex align-items-center"><svg class="ic"><use href="#object"/></svg>カメラ<svg class="ic ms-auto" style="color:#999"><use href="#pin"/></svg></div>
<div class="idblock namefield d-flex align-items-center"><button class="idpick" aria-label="オブジェクト選択"><svg class="ic"><use href="#object"/></svg><svg class="chev"><use href="#chev"/></svg></button><input aria-label="オブジェクト名" value="カメラ"></div>
<div class="pnl"><button class="opent"><svg width="12" height="10"><path d="M1 2l5 6 5-6"/></svg>トランスフォーム<svg class="grip"><use href="#grip"/></svg></button>
<div class="fields d-flex flex-column">
<div class="fgroup"><label for="lx">位置 X</label><input id="lx" class="numin" value="1 m"><svg class="ic lk"><use href="#lock"/></svg><i class="dot"></i><label for="ly">Y</label><input id="ly" class="numin" value="-10 m"><svg class="ic lk"><use href="#lock"/></svg><i class="dot"></i><label for="lz">Z</label><input id="lz" class="numin lastn" value="5 m"><svg class="ic lk"><use href="#lock"/></svg><i class="dot"></i></div>
<div class="fgroup"><label for="rx">回転 X</label><input id="rx" class="numin" value="80°"><svg class="ic lk"><use href="#lock"/></svg><i class="dot"></i><label for="ry">Y</label><input id="ry" class="numin" value="0°"><svg class="ic lk"><use href="#lock"/></svg><i class="dot"></i><label for="rz">Z</label><input id="rz" class="numin lastn" value="0°"><svg class="ic lk"><use href="#lock"/></svg><i class="dot"></i></div>
<div class="fgroup"><label for="md">モード</label><select id="md" class="bpick"><option>XYZ オイラー角</option></select><span></span><i class="dot"></i></div>
<div class="fgroup"><label for="sx">スケール X</label><input id="sx" class="numin" value="1.000"><svg class="ic lk"><use href="#lock"/></svg><i class="dot"></i><label for="sy">Y</label><input id="sy" class="numin" value="1.000"><svg class="ic lk"><use href="#lock"/></svg><i class="dot"></i><label for="sz">Z</label><input id="sz" class="numin lastn" value="1.000"><svg class="ic lk"><use href="#lock"/></svg><i class="dot"></i></div>
</div>
<button class="delta"><svg width="10" height="14"><use href="#right"/></svg>デルタトランスフォーム</button></div>
<div class="pnl"><button><svg width="10" height="14"><use href="#right"/></svg>関係<svg class="grip"><use href="#grip"/></svg></button></div>
<div class="pnl"><button><svg width="10" height="14"><use href="#right"/></svg>コレクション<svg class="grip"><use href="#grip"/></svg></button></div>
<div class="pnl"><button><svg width="10" height="14"><use href="#right"/></svg>モーションパス<svg class="grip"><use href="#grip"/></svg></button></div>
<div class="pnl"><button><svg width="10" height="14"><use href="#right"/></svg>可視性<svg class="grip"><use href="#grip"/></svg></button></div>
<div class="pnl"><button><svg width="10" height="14"><use href="#right"/></svg>ビューポート表示<svg class="grip"><use href="#grip"/></svg></button></div>
<div class="pnl mb-0"><button><svg width="10" height="14"><use href="#right"/></svg>カスタムプロパティ<svg class="grip"><use href="#grip"/></svg></button></div>
<div class="pbar"></div>
</div>
</div>
</section>
</aside>
</main>

<footer class="status d-flex align-items-center">
<span><svg viewBox="0 0 16 20"><path d="M9.500 1.500h1a4 4 0 0 1 4 4v9a4 4 0 0 1-4 4h-5a4 4 0 0 1-4-4V11"/><path class="solid" d="M8 1v8H1V6c0-3 2-5 7-5z"/></svg>選択</span>
<span><svg viewBox="0 0 16 20"><rect x="1.500" y="1.500" width="13" height="17" rx="4"/><path class="solid" d="M6 4h4v6H6z"/></svg>ビューをズーム</span>
<span><svg viewBox="0 0 16 20"><path d="M6.500 1.500h-1a4 4 0 0 0-4 4v9a4 4 0 0 0 4 4h5a4 4 0 0 0 4-4V11"/><path class="solid" d="M8 1v8h7V6c0-3-2-5-7-5z"/></svg>投げ縄選択</span>
<div class="ms-auto">4.0.1</div>
</footer>
</div>
<script>
// Perspective floor grid: one line per metre, a stronger one every ten metres.
const F=1044,CX=760,CY=484,A=54.7*Math.PI/180,T=60.4*Math.PI/180,D=25.6;
const sa=Math.sin(A),ca=Math.cos(A),st=Math.sin(T),ct=Math.cos(T);
const cam=(x,y)=>[-73/F*D+ca*x+sa*y,-134/F*D-sa*ct*x+ca*ct*y,D-sa*st*x+ca*st*y];
function seg(a,b){
  let p=cam(...a),q=cam(...b);const near=1;
  if(p[2]<near&&q[2]<near)return '';
  const clip=(u,v)=>{const k=(near-u[2])/(v[2]-u[2]);return u.map((c,i)=>c+(v[i]-c)*k)};
  if(p[2]<near)p=clip(p,q);if(q[2]<near)q=clip(q,p);
  const s=v=>(CX+F*v[0]/v[2]).toFixed(1)+' '+(CY-F*v[1]/v[2]).toFixed(1);
  return 'M'+s(p)+'L'+s(q);
}
let mi='',ma='';const R=160;
for(let n=-R;n<=R;n++){if(!n)continue;const s=seg([n,-R],[n,R])+seg([-R,n],[R,n]);if(n%10)mi+=s;else ma+=s}
minor.setAttribute('d',mi);major.setAttribute('d',ma);
axx.setAttribute('d',seg([-R,0],[R,0]));axy.setAttribute('d',seg([0,-R],[0,R]));
// Timeline ruler and ticks
let t5='',t10='';
for(let f=0;f<=255;f+=5){const x=Math.round(51.1+f*5.649)+.5;if(f%10)t5+='M'+x+' 0v73';else t10+='M'+x+' 0v73'}
five.setAttribute('d',t5);ten.setAttribute('d',t10);
for(let f=10;f<=250;f+=10){const s=document.createElement('span');s.textContent=f;ruler.append(s)}
</script>
</body>
</html>
